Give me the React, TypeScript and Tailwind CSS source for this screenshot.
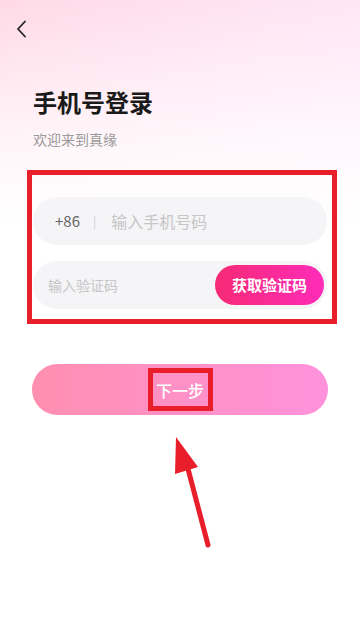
import React from "react";

export default function App() {
  return (
    <div
      className="relative w-[360px] h-[620px] overflow-hidden bg-[linear-gradient(180deg,rgba(255,255,255,0)_0%,rgba(255,255,255,0.7)_22%,#ffffff_36%),linear-gradient(100deg,#ffd9e6_0%,#ffe4f3_60%,#ffe8fa_100%)]"
      style={{ fontFamily: '"Noto Sans CJK SC", "Noto Sans", sans-serif' }}
    >
      <div className="pt-[20px] pl-[15px]">
        <svg width="14" height="18" viewBox="0 0 14 18" fill="none">
          <path d="M10 1.5 L3 9 L10 16.5" stroke="#222" strokeWidth="1.8" strokeLinecap="round" strokeLinejoin="round" />
        </svg>
      </div>

      <div className="pl-[33px] mt-[48px]">
        <div className="text-[24px] leading-[32px] font-bold text-[#1a1a1a]">手机号登录</div>
        <div className="mt-[11px] text-[14px] leading-[20px] text-[#9a9a9a]">欢迎来到真缘</div>
      </div>

      <div className="ml-[27px] mt-[21px] w-[310px] border-[5px] border-[#e81f2a] pl-[1px] pr-[5px] pt-[22px] pb-[10px] flex flex-col gap-[16px]">
        <div className="h-[48px] rounded-full bg-[#f5f4f6] flex items-center pl-[22px]">
          <span className="text-[15px] text-[#666]">+86</span>
          <span className="ml-[13px] text-[12px] text-[#d0d0d0]">|</span>
          <span className="ml-[15px] text-[16px] text-[#c6c6c6]">输入手机号码</span>
        </div>
        <div className="h-[48px] rounded-full bg-[#f5f4f6] flex items-center justify-between pl-[15px] pr-[3px]">
          <span className="text-[14px] text-[#c6c6c6]">输入验证码</span>
          <div className="h-[40px] w-[109px] rounded-full bg-[linear-gradient(90deg,#f62a76,#ff2cb8)] flex items-center justify-center text-white text-[15px] font-bold">
            获取验证码
          </div>
        </div>
      </div>

      <div className="ml-[32px] mt-[40px] w-[296px] h-[51px] rounded-full bg-[linear-gradient(90deg,#ff8fb0,#ff92dc)] flex items-center justify-center">
        <div className="w-[65px] h-[43px] border-[5px] border-[#e81f2a] flex items-center justify-center text-white text-[16px] font-medium">
          下一步
        </div>
      </div>

      <svg className="absolute left-0 top-0" width="360" height="620" viewBox="0 0 360 620">
        <line x1="187" y1="465" x2="208" y2="545" stroke="#e81f2a" strokeWidth="5" strokeLinecap="round" />
        <polygon points="176,437 175,474 198,467" fill="#e81f2a" />
      </svg>
    </div>
  );
}
